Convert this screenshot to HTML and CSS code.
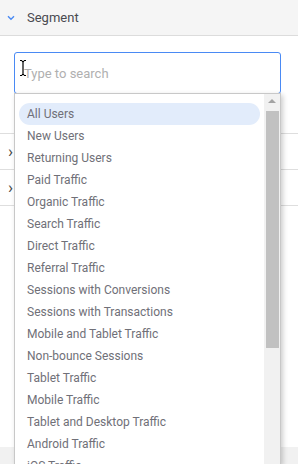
FILE: index.html
```html
<!DOCTYPE html>
<html>
<head>
<meta charset="utf-8">
<link rel="stylesheet" href="styles.css">
</head>
<body>
<div class="page">
  <div class="header">
    <svg class="hchev" width="8" height="6" viewBox="0 0 8 6"><path d="M1 1.2 L4 4.2 L7 1.2" fill="none" stroke="#4a8af4" stroke-width="1.4"/></svg>
    <span class="htitle">Segment</span>
  </div>
  <div class="body">
    <div class="search">
      <input class="input" type="text" placeholder="Type to search">
      <svg class="cursor" width="8" height="18" viewBox="0 0 8 18"><path d="M1 1.5 H3 M5 1.5 H7 M4 2 V16 M1 16.5 H3 M5 16.5 H7 M3 2 L4 3 L5 2 M3 16 L4 15 L5 16" fill="none" stroke="#000" stroke-width="1.2"/></svg>
    </div>
    <div class="rows">
      <div class="row"><span class="rchev">›</span></div>
      <div class="row"><span class="rchev">›</span></div>
    </div>
    <div class="spacer"></div>
    <div class="footer"></div>

    <div class="dropdown">
      <ul class="list">
        <li class="item active">All Users</li>
        <li class="item">New Users</li>
        <li class="item">Returning Users</li>
        <li class="item">Paid Traffic</li>
        <li class="item">Organic Traffic</li>
        <li class="item">Search Traffic</li>
        <li class="item">Direct Traffic</li>
        <li class="item">Referral Traffic</li>
        <li class="item">Sessions with Conversions</li>
        <li class="item">Sessions with Transactions</li>
        <li class="item">Mobile and Tablet Traffic</li>
        <li class="item">Non-bounce Sessions</li>
        <li class="item">Tablet Traffic</li>
        <li class="item">Mobile Traffic</li>
        <li class="item">Tablet and Desktop Traffic</li>
        <li class="item">Android Traffic</li>
        <li class="item">iOS Traffic</li>
      </ul>
      <div class="scrollbar">
        <div class="arrow"></div>
        <div class="thumb"></div>
      </div>
    </div>
  </div>
</div>
</body>
</html>
```
FILE: styles.css
```css
* { box-sizing: border-box; }
html, body { margin: 0; padding: 0; }
body {
  width: 298px;
  height: 464px;
  overflow: hidden;
  font-family: Roboto, "Liberation Sans", sans-serif;
  background: #fff;
}
.page { display: flex; flex-direction: column; height: 464px; overflow: hidden; }
.header {
  height: 36px;
  flex: none;
  background: #f5f5f5;
  border-bottom: 1px solid #dcdcdc;
  display: flex;
  align-items: center;
  padding-left: 7px;
}
.hchev { margin-right: 12px; margin-top: 1px; }
.htitle { font-size: 13px; color: #4a4a50; }
.body {
  position: relative;
  flex: 1;
  display: flex;
  flex-direction: column;
  overflow: hidden;
}
.search { position: relative; padding: 16px 17px 0 14px; }
.input {
  display: block;
  width: 267px;
  height: 42px;
  border: 1px solid #4a8af4;
  border-radius: 3px;
  padding: 0 0 0 9px;
  font-family: Roboto, "Liberation Sans", sans-serif;
  font-size: 13px;
  color: #333;
  outline: none;
}
.input::placeholder { color: #b0b0b0; }
.cursor { position: absolute; left: 19px; top: 23px; }
.rows { margin-top: 39px; }
.row {
  height: 36px;
  border-top: 1px solid #dedede;
  display: flex;
  align-items: center;
  padding-left: 8px;
}
.rchev { font-size: 17px; color: #444; line-height: 1; margin-top: -1px; }
.spacer { flex: 1; border-top: 1px solid #dedede; }
.footer { height: 17px; flex: none; background: #f1f1f1; }
.dropdown {
  position: absolute;
  left: 14px;
  top: 57px;
  width: 267px;
  height: 371px;
  background: #fff;
  border: 1px solid #c8c8c8;
  border-bottom: none;
  box-shadow: 2px 2px 5px rgba(0,0,0,0.2);
  display: flex;
}
.list {
  list-style: none;
  margin: 0;
  padding: 9px 0 0 4px;
  flex: 1;
  overflow: hidden;
}
.item {
  height: 22px;
  line-height: 22px;
  width: 241px;
  padding-left: 8px;
  font-size: 12px;
  color: #707078;
  border-radius: 11px;
  white-space: nowrap;
}
.item.active { background: #e2ecfb; }
.scrollbar {
  width: 16px;
  background: #f1f1f1;
  display: flex;
  flex-direction: column;
  align-items: center;
}
.arrow {
  margin-top: 5px;
  width: 0; height: 0;
  border-left: 4px solid transparent;
  border-right: 4px solid transparent;
  border-bottom: 4px solid #a3a3a3;
}
.thumb {
  margin-top: 8px;
  width: 13px;
  height: 237px;
  background: #c1c1c1;
}
```
